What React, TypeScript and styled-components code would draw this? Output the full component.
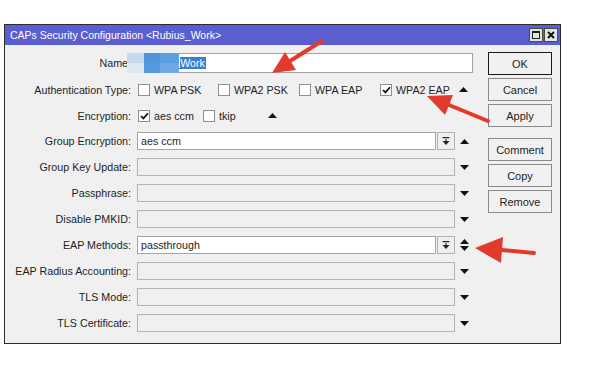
import { FC } from 'react';
import styled, { createGlobalStyle } from 'styled-components';

const GlobalStyle = createGlobalStyle`
    body {
        margin: 0;
        background: #fff;
        font-family: "Liberation Sans", Arial, sans-serif;
        font-size: 10.7px;
        color: #1e1e1e;
    }
`;

const Page = styled.div`
    position: relative;
    width: 595px;
    height: 390px;
    padding-top: 24px;
    padding-left: 4px;
    box-sizing: border-box;
`;

const Window = styled.div`
    width: 557px;
    height: 320px;
    box-sizing: border-box;
    border: 1px solid #2c2c2c;
    background: #f0f0f0;
    display: flex;
    flex-direction: column;
`;

const TitleBar = styled.div`
    height: 20px;
    flex: none;
    background: #5a5ecf;
    color: #fff;
    display: flex;
    align-items: center;
    justify-content: space-between;
    padding: 0 2px 0 5px;
    font-size: 10.5px;
`;

const TitleButtons = styled.div`
    display: flex;
    gap: 1px;
`;

const TitleBtn = styled.div`
    width: 14px;
    height: 14px;
    box-sizing: border-box;
    border: 1px solid #4a4a4a;
    background: #e4e4e4;
    display: flex;
    align-items: center;
    justify-content: center;
`;

const MaxBox = styled.div`
    width: 8px;
    height: 8px;
    box-sizing: border-box;
    border: 1px solid #222;
    border-top-width: 2px;
`;

const Body = styled.div`
    flex: 1;
    display: flex;
    padding-top: 4px;
`;

const Form = styled.div`
    width: 478px;
    display: flex;
    flex-direction: column;
`;

const Row = styled.div<{ $h: number }>`
    height: ${p => p.$h}px;
    display: flex;
    align-items: center;
`;

const Label = styled.div`
    width: 126px;
    margin-right: 6px;
    text-align: right;
    white-space: nowrap;
    flex: none;
`;

const Field = styled.div<{ $w: number; $white?: boolean; $h?: number }>`
    position: relative;
    width: ${p => p.$w}px;
    height: ${p => p.$h ?? 18}px;
    box-sizing: border-box;
    border: 1px solid ${p => (p.$white ? '#a4a4a4' : '#b2b2b2')};
    background: ${p => (p.$white ? '#fff' : '#f0f0f0')};
    padding-left: 3px;
    display: flex;
    align-items: center;
    white-space: nowrap;
    flex: none;
`;

const Selected = styled.span`
    background: #3a7cd6;
    color: #fff;
    padding-right: 1px;
`;

const Mosaic = styled.div`
    position: absolute;
    left: -11px;
    top: -1px;
    width: 52px;
    height: 20px;
    display: grid;
    grid-template-columns: 17px 16px 19px;
    grid-template-rows: 10px 10px;
`;

const Cell = styled.div<{ $c: string }>`
    background: ${p => p.$c};
`;

const DropBtn = styled.div`
    width: 18px;
    height: 18px;
    margin-left: 1px;
    box-sizing: border-box;
    border: 1px solid #b0b0b0;
    background: #efefef;
    display: flex;
    align-items: center;
    justify-content: center;
    flex: none;
`;

const ArrowSlot = styled.div`
    width: 20px;
    padding-left: 5px;
    display: flex;
    align-items: center;
    flex: none;
`;

const Checks = styled.div`
    display: flex;
    align-items: center;
    padding-left: 1px;
`;

const CheckItem = styled.div<{ $w?: number }>`
    display: flex;
    align-items: center;
    width: ${p => (p.$w ? `${p.$w}px` : 'auto')};
    white-space: nowrap;
`;

const Box = styled.div`
    width: 12px;
    height: 12px;
    box-sizing: border-box;
    border: 1px solid #8f8f8f;
    background: #fff;
    margin-right: 4px;
    display: flex;
    align-items: center;
    justify-content: center;
`;

const CheckArrow = styled.div<{ $gap: number }>`
    margin-left: ${p => p.$gap}px;
    display: flex;
`;

const Buttons = styled.div`
    margin-left: 5px;
    padding-top: 3px;
    display: flex;
    flex-direction: column;
    gap: 3px;
`;

const Btn = styled.div<{ $primary?: boolean; $gapTop?: number }>`
    width: 64px;
    height: 23px;
    box-sizing: border-box;
    border: 1px solid ${p => (p.$primary ? '#1a1a1a' : '#8a8a8a')};
    background: #f1f1f1;
    margin-top: ${p => p.$gapTop ?? 0}px;
    display: flex;
    align-items: center;
    justify-content: center;
    font-size: 11px;
`;

const Overlay = styled.svg`
    position: absolute;
    left: 0;
    top: 0;
    pointer-events: none;
`;

const Up: FC = () => (
    <svg width="9" height="5" viewBox="0 0 9 5"><polygon points="0,5 4.5,0 9,5" fill="#111" /></svg>
);

const Down: FC = () => (
    <svg width="9" height="5" viewBox="0 0 9 5"><polygon points="0,0 9,0 4.5,5" fill="#111" /></svg>
);

const UpDown: FC = () => (
    <svg width="9" height="12" viewBox="0 0 9 12">
        <polygon points="0,5 4.5,0 9,5" fill="#111" />
        <polygon points="0,7 9,7 4.5,12" fill="#111" />
    </svg>
);

const DropIcon: FC = () => (
    <svg width="8" height="9" viewBox="0 0 8 9">
        <rect x="0.5" y="0" width="7" height="1.2" fill="#222" />
        <rect x="3.4" y="2" width="1.2" height="3" fill="#222" />
        <polygon points="0.5,4 7.5,4 4,8" fill="#222" />
    </svg>
);

const Tick: FC = () => (
    <svg width="9" height="8" viewBox="0 0 9 8">
        <path d="M1 4 L3.4 6.4 L8 1.2" stroke="#111" strokeWidth="1.7" fill="none" />
    </svg>
);

type Check = { text: string; on?: boolean; w?: number };

const authChecks: Check[] = [
    { text: 'WPA PSK', w: 80 },
    { text: 'WPA2 PSK', w: 81 },
    { text: 'WPA EAP', w: 81 },
    { text: 'WPA2 EAP', on: true },
];

const encChecks: Check[] = [
    { text: 'aes ccm', on: true, w: 65 },
    { text: 'tkip' },
];

type FieldRow = { label: string; value?: string; arrow: 'up' | 'down' | 'both' };

const fieldRows: FieldRow[] = [
    { label: 'Group Encryption:', value: 'aes ccm', arrow: 'up' },
    { label: 'Group Key Update:', arrow: 'down' },
    { label: 'Passphrase:', arrow: 'down' },
    { label: 'Disable PMKID:', arrow: 'down' },
    { label: 'EAP Methods:', value: 'passthrough', arrow: 'both' },
    { label: 'EAP Radius Accounting:', arrow: 'down' },
    { label: 'TLS Mode:', arrow: 'down' },
    { label: 'TLS Certificate:', arrow: 'down' },
];

const mosaic = ['#c6daee', '#4e93db', '#5c9fe0', '#dce8f4', '#5598dd', '#6ea9e4'];

const CheckRow: FC<{ items: Check[]; gap: number }> = ({ items, gap }) => (
    <Checks>
        {items.map(c => (
            <CheckItem key={c.text} $w={c.w}>
                <Box>{c.on && <Tick />}</Box>
                {c.text}
            </CheckItem>
        ))}
        <CheckArrow $gap={gap}><Up /></CheckArrow>
    </Checks>
);

const RedArrow: FC<{ from: [number, number]; base: [number, number]; head: string }> = ({ from, base, head }) => (
    <g fill="#e23a2c" stroke="#e23a2c">
        <line x1={from[0]} y1={from[1]} x2={base[0]} y2={base[1]} strokeWidth="4" strokeLinecap="round" />
        <polygon points={head} stroke="none" />
    </g>
);

const App: FC = () => {
    return (
        <Page>
            <GlobalStyle />
            <Window>
                <TitleBar>
                    <span>CAPs Security Configuration &lt;Rubius_Work&gt;</span>
                    <TitleButtons>
                        <TitleBtn><MaxBox /></TitleBtn>
                        <TitleBtn>
                            <svg width="8" height="8" viewBox="0 0 8 8">
                                <path d="M1 1 L7 7 M7 1 L1 7" stroke="#111" strokeWidth="2" />
                            </svg>
                        </TitleBtn>
                    </TitleButtons>
                </TitleBar>
                <Body>
                    <Form>
                        <Row $h={27}>
                            <Label>Name:</Label>
                            <Field $w={336} $h={20} $white>
                                <span>Rubius_</span><Selected>Work</Selected>
                                <Mosaic>
                                    {mosaic.map((c, i) => <Cell key={i} $c={c} />)}
                                </Mosaic>
                            </Field>
                        </Row>
                        <Row $h={27}>
                            <Label>Authentication Type:</Label>
                            <CheckRow items={authChecks} gap={9} />
                        </Row>
                        <Row $h={25}>
                            <Label>Encryption:</Label>
                            <CheckRow items={encChecks} gap={32} />
                        </Row>
                        {fieldRows.map(r => (
                            <Row $h={26} key={r.label}>
                                <Label>{r.label}</Label>
                                {r.value ? (
                                    <>
                                        <Field $w={299} $white>{r.value}</Field>
                                        <DropBtn><DropIcon /></DropBtn>
                                    </>
                                ) : (
                                    <Field $w={318} />
                                )}
                                <ArrowSlot>
                                    {r.arrow === 'up' && <Up />}
                                    {r.arrow === 'down' && <Down />}
                                    {r.arrow === 'both' && <UpDown />}
                                </ArrowSlot>
                            </Row>
                        ))}
                    </Form>
                    <Buttons>
                        <Btn $primary>OK</Btn>
                        <Btn>Cancel</Btn>
                        <Btn>Apply</Btn>
                        <Btn $gapTop={8}>Comment</Btn>
                        <Btn>Copy</Btn>
                        <Btn>Remove</Btn>
                    </Buttons>
                </Body>
            </Window>
            <Overlay width="595" height="390" viewBox="0 0 595 390">
                <RedArrow from={[322, 41]} base={[290, 61]} head="272,73 296,70 285,52" />
                <RedArrow from={[488, 121]} base={[449, 105]} head="427,96 453,95 445,115" />
                <RedArrow from={[534, 253]} base={[502, 250]} head="475,248 503,237 501,263" />
            </Overlay>
        </Page>
    );
};

export default App;
